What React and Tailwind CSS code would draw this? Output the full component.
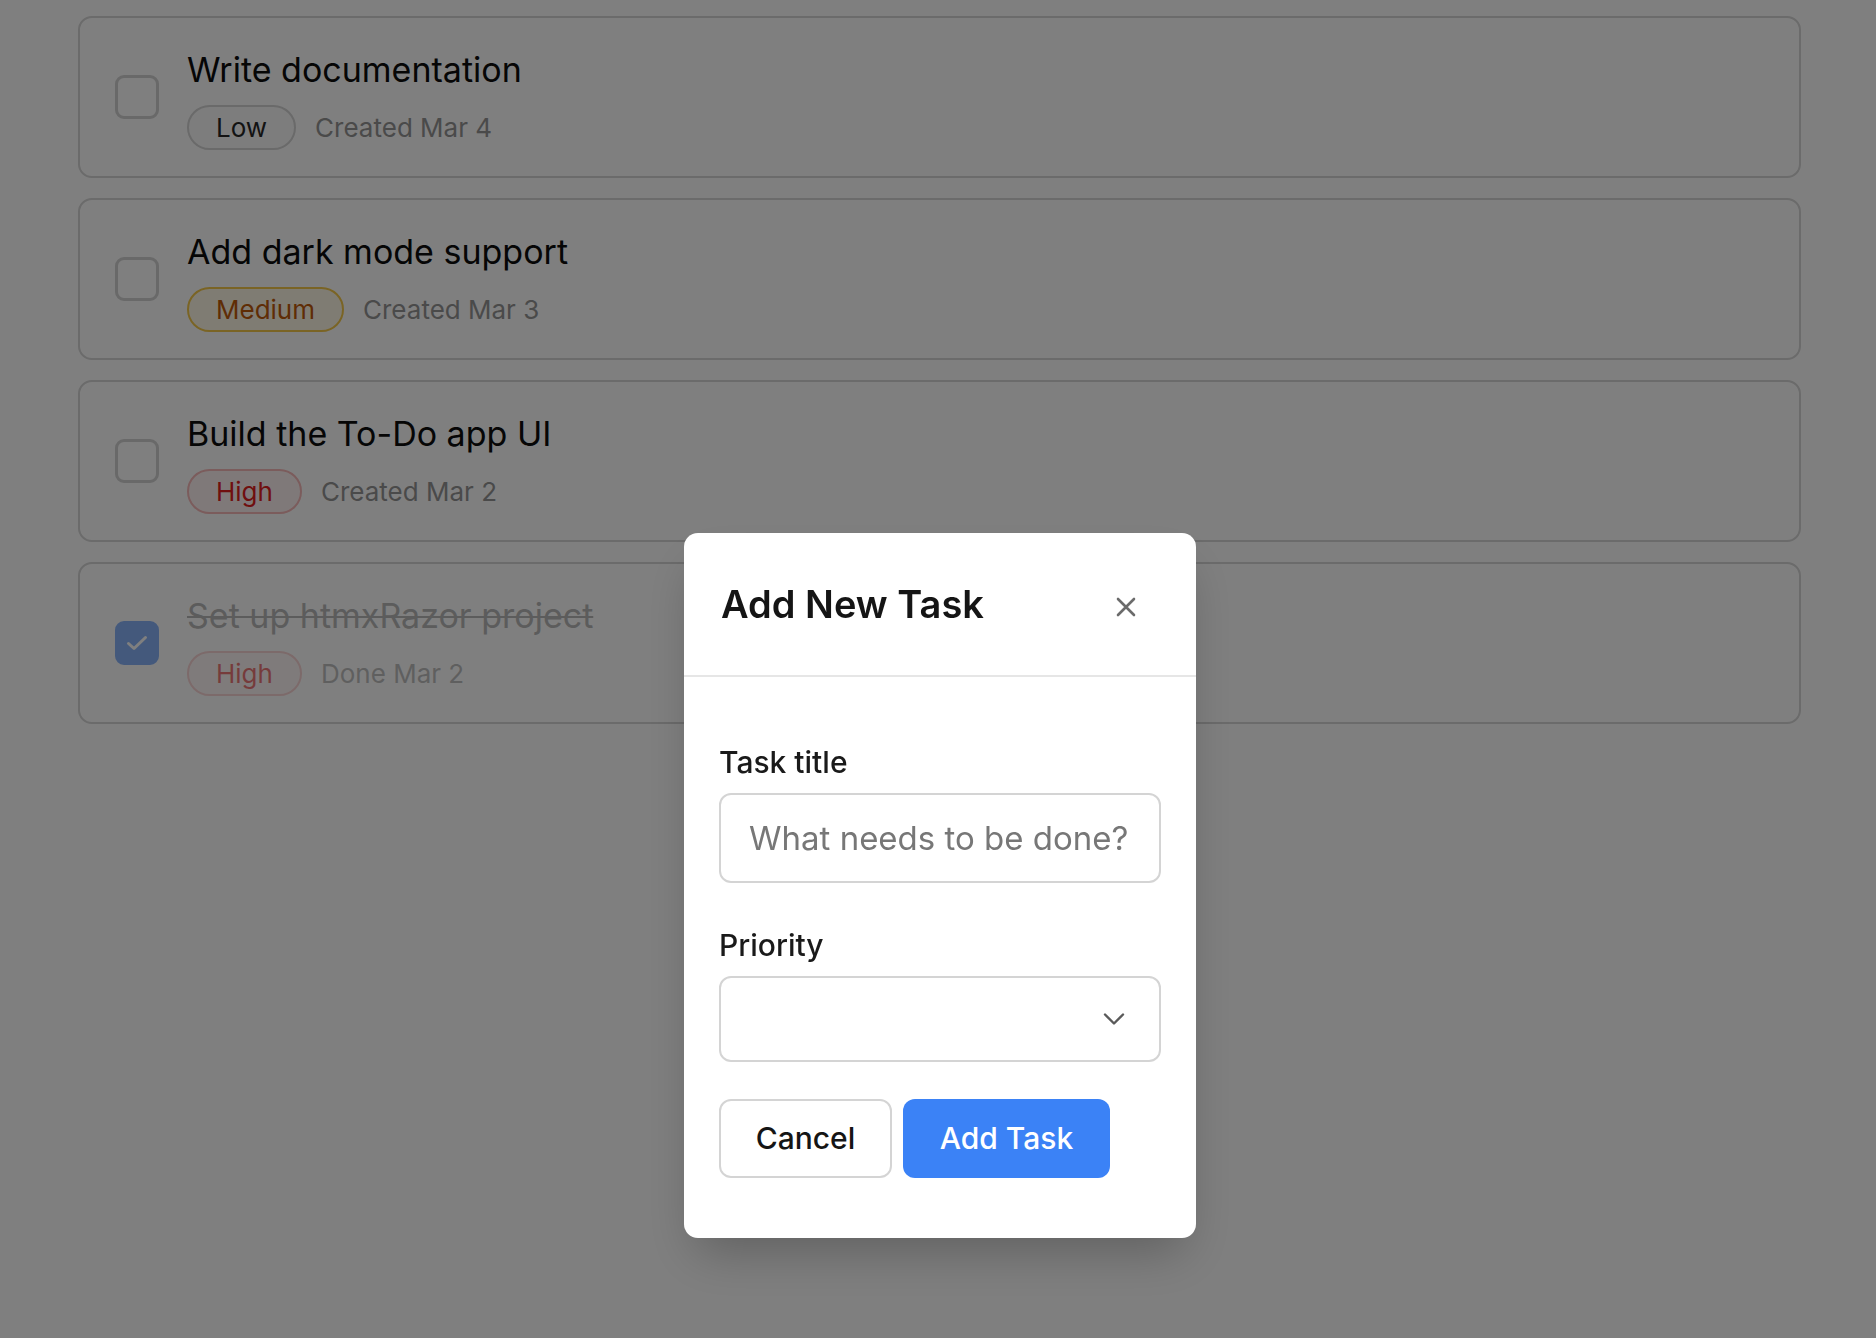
import React from "react";

const tasks = [
    {id: 1, title: "Write documentation", priority: "low", meta: "Created Mar 4", done: false},
    {id: 2, title: "Add dark mode support", priority: "medium", meta: "Created Mar 3", done: false},
    {id: 3, title: "Build the To-Do app UI", priority: "high", meta: "Created Mar 2", done: false},
    {id: 4, title: "Set up htmxRazor project", priority: "high", meta: "Done Mar 2", done: true},
];

const badgeStyles = {
    low: "border-[#d4d4d4] bg-[#fafafa] text-[#262626]",
    medium: "border-[#f5c94a] bg-[#fff8e6] text-[#bf5a0b]",
    high: "border-[#f6b8b8] bg-[#fff3f3] text-[#e01e1e]",
};

const badgeLabels = {low: "Low", medium: "Medium", high: "High"};

function classNames(...classes) {
    return classes.filter(Boolean).join(" ");
}

const CheckIcon = () => (
    <svg width="22" height="16" viewBox="0 0 22 16" fill="none" aria-hidden="true">
        <path d="M2.5 8.5l5.5 5L19.5 2.5" stroke="white" strokeWidth="3" strokeLinecap="round" strokeLinejoin="round"/>
    </svg>
);

const TaskCard = ({task}) => (
    <div className="flex items-center gap-7 rounded-[14px] border-2 border-[#d6d6d6] bg-white py-[26px] pl-[35px] pr-8">
        <span
            className={classNames(
                task.done ? "border-[#3b82f6] bg-[#3b82f6] opacity-60" : "border-[#d2d2d2] bg-white",
                "flex h-11 w-11 shrink-0 items-center justify-center rounded-[9px] border-[3px]"
            )}
        >
            {task.done ? <CheckIcon/> : null}
        </span>
        <div className={classNames(task.done ? "opacity-60" : "", "flex flex-col")}>
            <div
                className={classNames(
                    task.done ? "text-[#8a8a8a] line-through decoration-2" : "text-[#0c0c0c]",
                    "pt-px text-[34px] leading-[50px]"
                )}
            >
                {task.title}
            </div>
            <div className="mt-[10px] flex items-center gap-[19px]">
                <span
                    className={classNames(
                        badgeStyles[task.priority],
                        "inline-flex h-[45px] items-center rounded-full border-2 px-[27px] text-[26px]"
                    )}
                >
                    {badgeLabels[task.priority]}
                </span>
                <span className="text-[26px] text-[#949494]">{task.meta}</span>
            </div>
        </div>
    </div>
);

const AddTaskModal = () => (
    <div className="fixed inset-0 flex items-start justify-center bg-black/50 pl-[4px] pt-[533px]">
        <div className="w-[512px] rounded-[14px] bg-white shadow-2xl">
            <div className="flex h-[144px] items-center justify-between border-b-2 border-[#e6e6e6] pl-[37px] pr-[60px]">
                <h2 className="text-[38px] font-semibold text-[#151515]">Add New Task</h2>
                <button type="button" className="mt-[5px] text-[#6b6b6b]" aria-label="Close">
                    <svg width="20" height="20" viewBox="0 0 20 20" fill="none">
                        <path d="M2 2l16 16M18 2L2 18" stroke="currentColor" strokeWidth="2.6" strokeLinecap="round"/>
                    </svg>
                </button>
            </div>
            <div className="px-[35px] pb-[60px] pt-[63px]">
                <label className="block text-[30px] font-medium leading-[44px] text-[#1a1a1a]">Task title</label>
                <input
                    type="text"
                    placeholder="What needs to be done?"
                    className="mt-[9px] h-[90px] w-full rounded-[12px] border-2 border-[#d4d4d4] px-[28px] text-[33px] text-[#1a1a1a] placeholder:text-[#777777] focus:outline-none"
                />
                <label className="mt-[40px] block text-[30px] font-medium leading-[44px] text-[#1a1a1a]">Priority</label>
                <div className="mt-[9px] flex h-[86px] w-full items-center justify-end rounded-[12px] border-2 border-[#d4d4d4] pr-[34px]">
                    <svg width="22" height="12" viewBox="0 0 22 12" fill="none" className="text-[#5a5a5a]">
                        <path d="M2 1.5l9 9 9-9" stroke="currentColor" strokeWidth="2.4" strokeLinecap="round" strokeLinejoin="round"/>
                    </svg>
                </div>
                <div className="mt-[37px] flex gap-[11px]">
                    <button
                        type="button"
                        className="h-[79px] w-[173px] rounded-[12px] border-2 border-[#d4d4d4] bg-white text-[30px] font-medium text-[#151515]"
                    >
                        Cancel
                    </button>
                    <button
                        type="button"
                        className="h-[79px] w-[207px] rounded-[12px] bg-[#3b82f6] text-[30px] font-medium text-white"
                    >
                        Add Task
                    </button>
                </div>
            </div>
        </div>
    </div>
);

export default function App() {
    return (
        <div className="relative min-h-screen bg-white font-['Inter',sans-serif]">
            <div className="flex flex-col gap-5 pl-[78px] pr-[75px] pt-4">
                {tasks.map((task) => (
                    <TaskCard key={task.id} task={task}/>
                ))}
            </div>
            <AddTaskModal/>
        </div>
    );
}
